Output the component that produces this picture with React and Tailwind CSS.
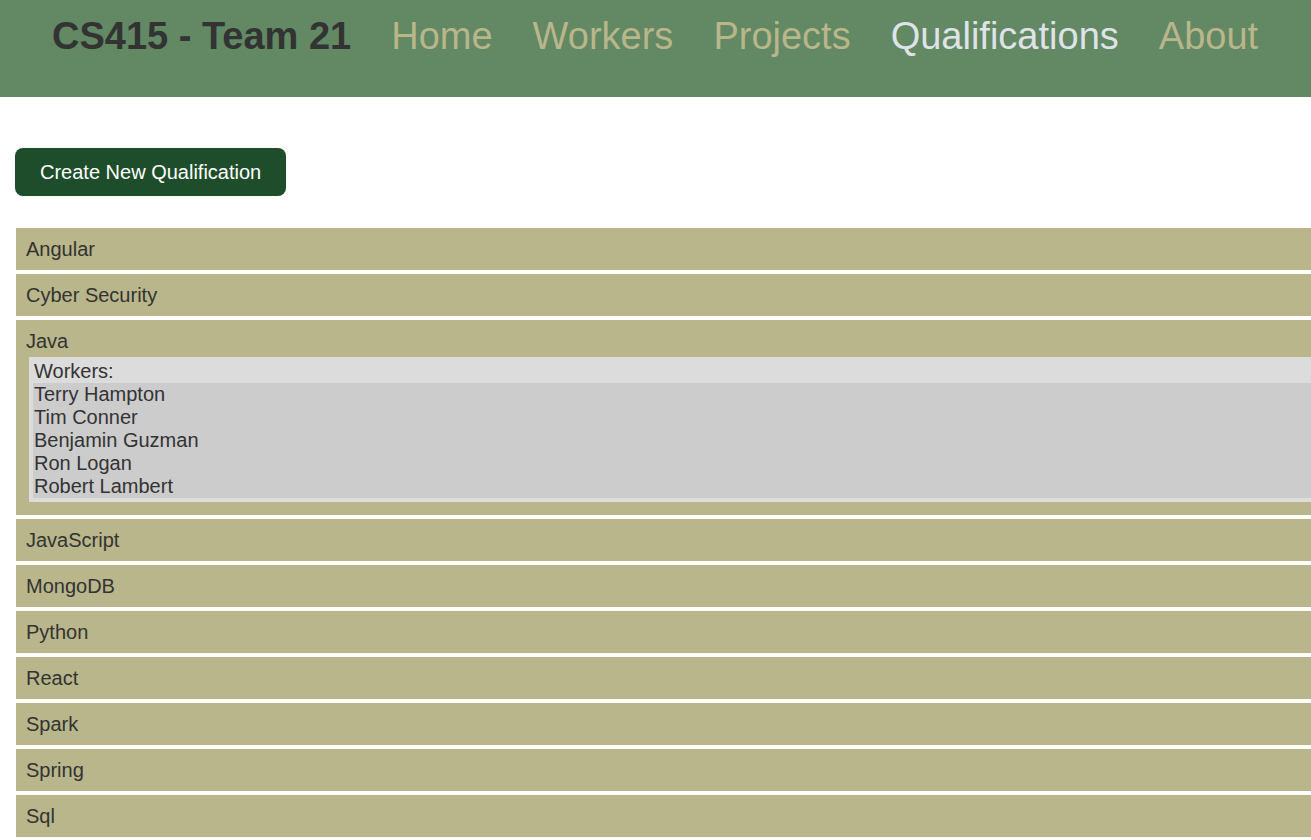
import { useState } from 'react';

const navLinks = ['Home', 'Workers', 'Projects', 'Qualifications', 'About'];

const qualifications = [
  { name: 'Angular', workers: [] },
  { name: 'Cyber Security', workers: [] },
  {
    name: 'Java',
    workers: ['Terry Hampton', 'Tim Conner', 'Benjamin Guzman', 'Ron Logan', 'Robert Lambert'],
  },
  { name: 'JavaScript', workers: [] },
  { name: 'MongoDB', workers: [] },
  { name: 'Python', workers: [] },
  { name: 'React', workers: [] },
  { name: 'Spark', workers: [] },
  { name: 'Spring', workers: [] },
  { name: 'Sql', workers: [] },
];

const Header = () => (
  <header className="h-[97px] bg-[#628864] flex items-start pt-[14px] pl-[52px]">
    <h1 className="text-[38px] leading-[44px] font-bold text-[#333333] mr-[40px]">CS415 - Team 21</h1>
    <nav className="flex gap-[40px]">
      {navLinks.map((link) => (
        <a
          key={link}
          href="#"
          className={`text-[38px] leading-[44px] ${link === 'Qualifications' ? 'text-[#dfe3e7]' : 'text-[#b8b68a]'}`}
        >
          {link}
        </a>
      ))}
    </nav>
  </header>
);

const QualificationRow = ({ qual, open, onToggle }) => (
  <div className="ml-4 mb-1 bg-[#b8b68a] text-[#333333] text-[20px] leading-[23px]">
    <div onClick={onToggle} className={`pl-[10px] cursor-pointer ${open ? 'pt-[10px] h-[37px]' : 'h-[42px] flex items-center'}`}>
      {qual.name}
    </div>
    {open && (
      <div className="pb-[13px] pl-[13px]">
        <div className="bg-[#dcdcdc] pt-[3px] pb-1 pl-1">
          <div className="pl-px">Workers:</div>
          <div className="bg-[#cccccc] pl-px">
            {qual.workers.map((w) => (
              <div key={w}>{w}</div>
            ))}
          </div>
        </div>
      </div>
    )}
  </div>
);

export default function App() {
  const [openQual, setOpenQual] = useState('Java');

  return (
    <div className="min-h-screen bg-white overflow-hidden font-['Liberation_Sans',Arial,sans-serif]">
      <Header />
      <main className="pt-[51px]">
        <button className="ml-[15px] h-12 px-[25px] rounded-lg bg-[#1e4d2b] text-white text-[20px]">
          Create New Qualification
        </button>
        <div className="mt-8">
          {qualifications.map((q) => (
            <QualificationRow
              key={q.name}
              qual={q}
              open={openQual === q.name}
              onToggle={() => setOpenQual(openQual === q.name ? null : q.name)}
            />
          ))}
        </div>
      </main>
    </div>
  );
}
